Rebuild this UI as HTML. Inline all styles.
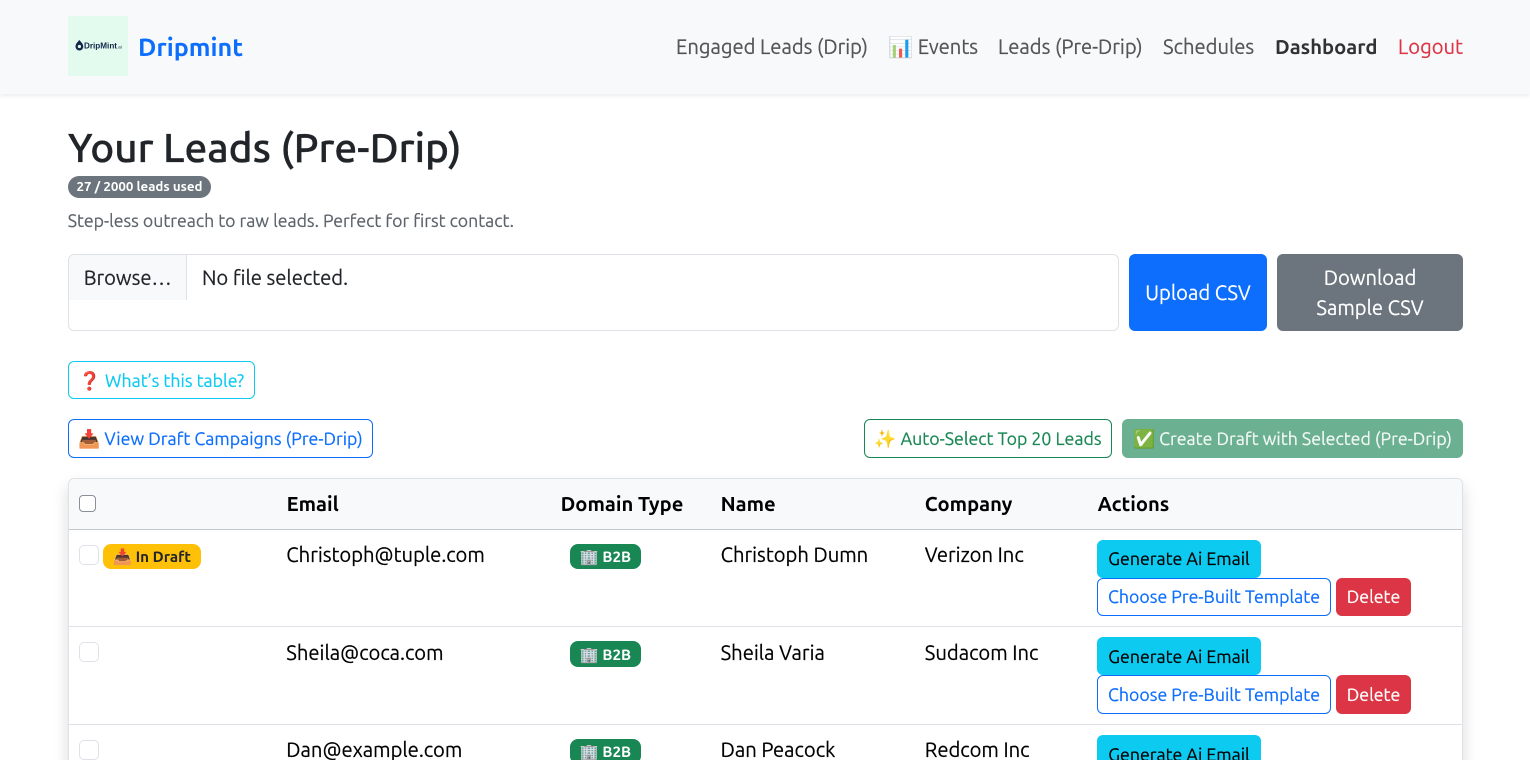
<!DOCTYPE html>
<html lang="en"><head><meta charset="utf-8"><title>Dripmint</title>
<style>
*{box-sizing:border-box}
html,body{margin:0;padding:0;width:1530px;height:760px;overflow:hidden;background:#fff}
body{position:relative;font-family:"Ubuntu Sans","Ubuntu","Liberation Sans","Noto Color Emoji",sans-serif;color:#212529;font-size:17.75px;-webkit-text-stroke:.2px}
.a{position:absolute;white-space:nowrap}
.t{position:absolute;white-space:nowrap;line-height:24px;font-size:20.2px;color:#212529}
.d{color:#000}
.n{top:36px;color:rgba(0,0,0,.65)}
.b{position:absolute;border-radius:6px;border:1px solid transparent;text-align:center;white-space:nowrap;font-size:17.75px;line-height:26.4px;padding-top:5.5px}
.b1{background:#0dcaf0;color:#000;left:1097px;width:164px;height:38px}
.b2{background:#fff;border-color:#0d6efd;color:#0d6efd;left:1097px;width:234px;height:38px}
.b3{background:#dc3545;color:#fff;left:1336px;width:75px;height:38px}
.cb{position:absolute;left:79px;width:20px;height:20px;border:1px solid #dee2e6;border-radius:5px;background:#fff}
.bg{position:absolute;left:570px;width:71px;height:25px;border-radius:8px;background:#198754;color:#fff;font-weight:700;font-size:15.2px;line-height:26px;text-align:center;white-space:nowrap;-webkit-text-stroke:0}
.line{position:absolute;left:69px;width:1393px;height:1px;background:#dee2e6}
.th{position:absolute;top:493px;font-size:20.2px;line-height:24px;font-weight:700;color:#000;white-space:nowrap;-webkit-text-stroke:0}
</style></head><body>

<div class="a" style="left:0;top:0;width:1530px;height:94px;background:#f8f9fa;box-shadow:0 2px 4px rgba(0,0,0,.075)"></div>
<div class="a" style="left:68px;top:16px;width:60px;height:60px;background:#e2fbee">
<svg width="60" height="60" viewBox="0 0 60 60" style="position:absolute;left:0;top:0"><path d="M11.300 24c2.200 2.400 4 4.100 4 6.600a3.900 3.900 0 0 1-7.800 0c0-2.500 1.700-4.200 3.800-6.600z" fill="#14284b"/><circle cx="11.400" cy="30.500" r="1.600" fill="#e2fbee"/><text x="16" y="32.500" font-family="Liberation Sans" font-size="8" font-weight="700" textLength="33" lengthAdjust="spacingAndGlyphs" fill="#14284b" stroke="none">DripMint</text><text x="49" y="32.500" font-family="Liberation Sans" font-size="4.500" fill="#14284b" stroke="none">.ai</text></svg>
</div>
<div class="t" style="left:138px;top:34px;font-size:25.200px;line-height:28px;font-weight:700;color:#0d6efd;-webkit-text-stroke:0">Dripmint</div>
<div class="t n" style="left:676px">Engaged Leads (Drip)</div>
<div class="t n" style="left:888px">📊 Events</div>
<div class="t n" style="left:998px">Leads (Pre-Drip)</div>
<div class="t n" style="left:1163px">Schedules</div>
<div class="t n" style="left:1275px;font-weight:700;color:rgba(0,0,0,.8);-webkit-text-stroke:0">Dashboard</div>
<div class="t n" style="left:1398px;color:#dc3545">Logout</div>

<div class="t" style="left:68px;top:125px;font-size:40.600px;line-height:48px;font-weight:500;-webkit-text-stroke:.35px">Your Leads (Pre-Drip)</div>
<div class="a" style="left:68px;top:176px;width:143px;height:22px;border-radius:11px;background:#6c757d;color:#fff;font-size:13.300px;font-weight:700;line-height:23px;text-align:center;-webkit-text-stroke:0">27 / 2000 leads used</div>
<div class="t" style="left:67.700px;top:209px;font-size:17.700px;line-height:25px;color:#5c636a">Step-less outreach to raw leads. Perfect for first contact.</div>

<div class="a" style="left:68px;top:254px;width:1051px;height:77px;border:1px solid #dee2e6;border-radius:6px;background:#fff;overflow:hidden">
<div class="a" style="left:0;top:0;width:118px;height:45px;background:#f8f9fa;border-right:1px solid #dee2e6"></div>
</div>
<div class="t" style="left:83.700px;top:267px">Browse…</div>
<div class="t" style="left:202px;top:267px">No file selected.</div>
<div class="b" style="left:1129px;top:254px;width:138px;height:77px;background:#0d6efd;color:#fff;font-size:20.200px;line-height:30px;padding-top:24px">Upload CSV</div>
<div class="b" style="left:1277px;top:254px;width:186px;height:77px;background:#6c757d;color:#fff;font-size:20.200px;line-height:30px;padding-top:9px;white-space:normal">Download<br>Sample CSV</div>

<div class="b" style="left:68px;top:361px;width:187px;height:38px;border-color:#0dcaf0;color:#0dcaf0;padding-top:6px">❓ What’s this table?</div>
<div class="b" style="left:68px;top:419px;width:305px;height:39px;border-color:#0d6efd;color:#0d6efd;padding-top:6px">📥 View Draft Campaigns (Pre-Drip)</div>
<div class="b" style="left:864px;top:419px;width:248px;height:39px;border-color:#198754;color:#198754;padding-top:6px">✨ Auto-Select Top 20 Leads</div>
<div class="b" style="left:1122px;top:419px;width:341px;height:39px;background:#6bb091;color:#f2f8f5;padding-top:6px">✅ Create Draft with Selected (Pre-Drip)</div>

<div class="a" style="left:68px;top:478px;width:1395px;height:300px;border:1px solid #dee2e6;border-radius:6px;background:#fff;box-shadow:0 8px 16px rgba(0,0,0,.15)"></div>
<div class="a" style="left:69px;top:479px;width:1393px;height:50px;background:#f8f9fa;border-radius:5px 5px 0 0"></div>
<div class="line" style="top:529px;background:#c4c8cb"></div>
<div class="line" style="top:626px"></div>
<div class="line" style="top:724px"></div>

<div class="a" style="left:79px;top:495px;width:17px;height:17px;border:1px solid #8a8f98;border-radius:4px;background:#fff"></div>
<div class="th" style="left:286.600px">Email</div>
<div class="th" style="left:560.600px">Domain Type</div>
<div class="th" style="left:720.600px">Name</div>
<div class="th" style="left:924.800px">Company</div>
<div class="th" style="left:1097.600px">Actions</div>

<div class="cb" style="top:545px"></div>
<div class="a" style="left:103px;top:544px;width:98px;height:25px;border-radius:8px;background:#ffc107;color:#212529;font-size:15.200px;font-weight:700;line-height:26px;text-align:center;-webkit-text-stroke:0">📥 In Draft</div>
<div class="t d" style="left:286.300px;top:544px">Christoph@tuple.com</div>
<div class="bg" style="top:544px">🏢 B2B</div>
<div class="t d" style="left:720.600px;top:544px">Christoph Dumn</div>
<div class="t d" style="left:924.800px;top:544px">Verizon Inc</div>
<div class="b b1" style="top:540px;padding-top:4.500px">Generate Ai Email</div>
<div class="b b2" style="top:578px;padding-top:4.500px">Choose Pre-Built Template</div>
<div class="b b3" style="top:578px;padding-top:4.500px">Delete</div>

<div class="cb" style="top:642px"></div>
<div class="t d" style="left:286.300px;top:642px">Sheila@coca.com</div>
<div class="bg" style="top:641px;height:26px;line-height:28px">🏢 B2B</div>
<div class="t d" style="left:720.600px;top:642px">Sheila Varia</div>
<div class="t d" style="left:924.800px;top:642px">Sudacom Inc</div>
<div class="b b1" style="top:637px">Generate Ai Email</div>
<div class="b b2" style="top:675px;height:39px">Choose Pre-Built Template</div>
<div class="b b3" style="top:675px;height:39px">Delete</div>

<div class="cb" style="top:740px"></div>
<div class="t d" style="left:286.300px;top:739px">Dan@example.com</div>
<div class="bg" style="top:739px;line-height:27px">🏢 B2B</div>
<div class="t d" style="left:720.600px;top:739px">Dan Peacock</div>
<div class="t d" style="left:924.800px;top:739px">Redcom Inc</div>
<div class="b b1" style="top:735px">Generate Ai Email</div>
</body></html>
